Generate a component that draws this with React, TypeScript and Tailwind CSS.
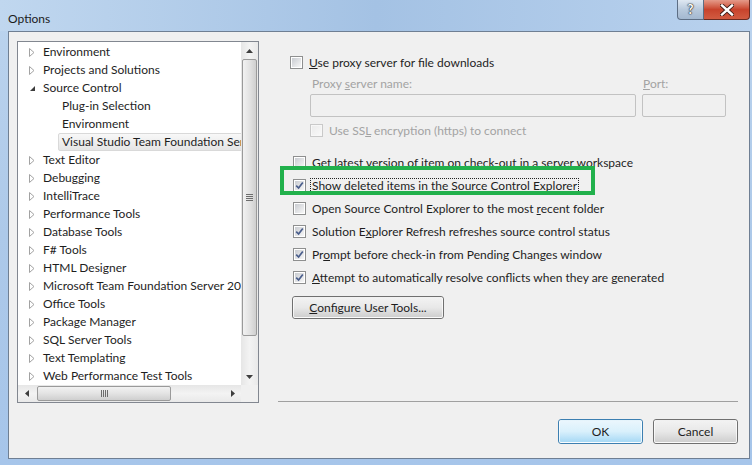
import React from "react";

const Check = ({ checked, disabled }: { checked?: boolean; disabled?: boolean }) => (
  <span
    className={`relative flex h-[13px] w-[13px] shrink-0 items-center justify-center border ${
      disabled ? "border-[#c9c9c9] bg-[#f7f7f7]" : "border-[#8e8f8f] bg-white"
    }`}
  >
    <span
      className={`h-[9px] w-[9px] bg-gradient-to-br ${
        disabled ? "from-[#ececec] to-[#f8f8f8]" : "from-[#c9ccd1] to-[#f7f7f7]"
      }`}
    />
    {checked && (
      <svg className="absolute left-[1px] top-[1px]" width="9" height="9" viewBox="0 0 9 9">
        <path d="M1.2 4.6 L3.6 7 L7.8 1.4" stroke="#4a5e8c" strokeWidth="1.7" fill="none" />
      </svg>
    )}
  </span>
);

const Arrow = ({ open }: { open?: boolean }) =>
  open ? (
    <svg width="7" height="7" viewBox="0 0 7 7">
      <polygon points="6,1 6,6 1,6" fill="#3c3c3c" />
    </svg>
  ) : (
    <svg width="6" height="9" viewBox="0 0 6 9">
      <path d="M0.5 0.5 L5 4.5 L0.5 8.5 Z" stroke="#a2a2a2" fill="#fff" strokeWidth="1" />
    </svg>
  );

const tree: { label: string; level: number; open?: boolean; selected?: boolean }[] = [
  { label: "Environment", level: 0 },
  { label: "Projects and Solutions", level: 0 },
  { label: "Source Control", level: 0, open: true },
  { label: "Plug-in Selection", level: 1 },
  { label: "Environment", level: 1 },
  { label: "Visual Studio Team Foundation Server", level: 1, selected: true },
  { label: "Text Editor", level: 0 },
  { label: "Debugging", level: 0 },
  { label: "IntelliTrace", level: 0 },
  { label: "Performance Tools", level: 0 },
  { label: "Database Tools", level: 0 },
  { label: "F# Tools", level: 0 },
  { label: "HTML Designer", level: 0 },
  { label: "Microsoft Team Foundation Server 2010 Power Tools", level: 0 },
  { label: "Office Tools", level: 0 },
  { label: "Package Manager", level: 0 },
  { label: "SQL Server Tools", level: 0 },
  { label: "Text Templating", level: 0 },
  { label: "Web Performance Test Tools", level: 0 },
];

const Grip = ({ vertical }: { vertical?: boolean }) => (
  <div className={`flex ${vertical ? "flex-col gap-[1px]" : "gap-[1px]"}`}>
    {[0, 1, 2, 3].map((i) => (
      <span key={i} className={vertical ? "h-px w-[7px] bg-[#6d6d6d]" : "h-[7px] w-px bg-[#6d6d6d]"} />
    ))}
  </div>
);

const TreeView = () => (
  <div className="flex h-[362px] w-[242px] flex-col border border-[#828790] bg-white">
    <div className="flex min-h-0 flex-1">
      <div className="w-[223px] overflow-hidden pt-[1px]">
        {tree.map((t, i) =>
          t.selected ? (
            <div key={i} className="flex h-[18px] items-center pl-[40px]">
              <div className="flex h-[18px] w-[200px] shrink-0 items-center whitespace-nowrap rounded-[2px] border border-[#d9d9d9] bg-gradient-to-b from-[#f8f8f8] to-[#e5e5e5] pl-[3px]">
                {t.label}
              </div>
            </div>
          ) : (
            <div
              key={i}
              className={`flex h-[18px] items-center whitespace-nowrap ${t.level ? "pl-[44px]" : "pl-[11px]"}`}
            >
              {t.level === 0 && (
                <span className="flex w-[14px] shrink-0 items-center">
                  <Arrow open={t.open} />
                </span>
              )}
              <span className="shrink-0">{t.label}</span>
            </div>
          )
        )}
      </div>
      <div className="flex w-[17px] flex-col bg-gradient-to-r from-[#e6e6e6] via-[#f3f3f3] to-[#e9e9e9]">
        <div className="flex h-[17px] items-center justify-center">
          <svg width="7" height="4" viewBox="0 0 7 4">
            <polygon points="3.5,0 7,4 0,4" fill="#3e3e3e" />
          </svg>
        </div>
        <div className="mx-px flex h-[277px] items-center justify-center rounded-[2px] border border-[#9a9a9a] bg-gradient-to-r from-[#f2f2f2] via-[#e3e3e3] to-[#cfcfcf]">
          <Grip vertical />
        </div>
        <div className="flex-1" />
        <div className="flex h-[17px] items-center justify-center">
          <svg width="7" height="4" viewBox="0 0 7 4">
            <polygon points="0,0 7,0 3.5,4" fill="#3e3e3e" />
          </svg>
        </div>
      </div>
    </div>
    <div className="flex h-[17px]">
      <div className="flex w-[223px] bg-gradient-to-b from-[#e6e6e6] via-[#f3f3f3] to-[#e9e9e9]">
        <div className="flex w-[17px] items-center justify-center">
          <svg width="4" height="7" viewBox="0 0 4 7">
            <polygon points="4,0 4,7 0,3.5" fill="#3e3e3e" />
          </svg>
        </div>
        <div className="my-px ml-[2px] flex w-[134px] items-center justify-center rounded-[2px] border border-[#9a9a9a] bg-gradient-to-b from-[#f2f2f2] via-[#e3e3e3] to-[#cfcfcf]">
          <Grip />
        </div>
        <div className="flex-1" />
        <div className="flex w-[17px] items-center justify-center">
          <svg width="4" height="7" viewBox="0 0 4 7">
            <polygon points="0,0 4,3.5 0,7" fill="#3e3e3e" />
          </svg>
        </div>
      </div>
      <div className="w-[17px] bg-[#f0f0f0]" />
    </div>
  </div>
);

const Row = ({ checked, children }: { checked?: boolean; children: React.ReactNode }) => (
  <div className="flex h-[23px] items-center gap-[6px] whitespace-nowrap">
    <Check checked={checked} />
    <span>{children}</span>
  </div>
);

const WinButton = ({
  children,
  width,
  primary,
}: {
  children: React.ReactNode;
  width: string;
  primary?: boolean;
}) => (
  <button
    className={`relative flex items-center justify-center overflow-hidden rounded-[3px] border ${width} ${
      primary ? "border-[#3c7fb1]" : "border-[#707070]"
    }`}
  >
    <span
      className={`absolute inset-0 rounded-[2px] border border-white/70 bg-gradient-to-b ${
        primary
          ? "from-[#eaf6fd] via-[#d9f0fc] to-[#a7d9f5]"
          : "from-[#f2f2f2] via-[#e8e8e8] to-[#cfcfcf]"
      }`}
    />
    <span className="relative">{children}</span>
  </button>
);

export default function App() {
  return (
    <div className="flex h-[465px] w-[752px] flex-col overflow-hidden bg-gradient-to-b from-[#bcd4ee] via-[#adc9e9] to-[#a6c5ea] font-[Lato,sans-serif] text-[12px] text-[#1e1e1e]">
      {/* title bar */}
      <div className="flex h-[31px] shrink-0 items-start justify-between bg-gradient-to-r from-[#c0d7ef] via-[#a4c2e4] to-[#b9d2ee]">
        <div className="pl-[8px] pt-[10px] text-[12px] text-[#1b1b1b]">Options</div>
        <div className="mr-[2px] flex">
          <div className="flex h-[20px] w-[27px] items-center justify-center rounded-bl-[4px] border border-t-0 border-[#5d6e84] bg-gradient-to-b from-[#dfe8f2] via-[#b8c9dc] to-[#a3b8d0]">
            <span className="text-[13px] font-bold leading-none text-white [text-shadow:0_0_1px_#222,0_0_1px_#222,0_0_2px_#333]">
              ?
            </span>
          </div>
          <div className="flex h-[20px] w-[46px] items-center justify-center rounded-br-[4px] border border-l-0 border-t-0 border-[#6a2a20] bg-gradient-to-b from-[#e49a89] via-[#c8432c] to-[#d25b41]">
            <svg width="14" height="12" viewBox="0 0 14 12">
              <path d="M2 1.5 L12 10.5 M12 1.5 L2 10.5" stroke="#3b1a14" strokeWidth="4.2" strokeLinecap="square" />
              <path d="M2 1.5 L12 10.5 M12 1.5 L2 10.5" stroke="#fff" strokeWidth="2.4" strokeLinecap="square" />
            </svg>
          </div>
        </div>
      </div>

      {/* client area */}
      <div className="mb-[6px] ml-[8px] mr-[2px] flex flex-1 flex-col border border-[#6f7f93] bg-[#f0f0f0]">
        <div className="flex pl-[8px] pt-[9px]">
          <TreeView />
          <div className="relative ml-[19px] flex w-[460px] flex-col">
            <div className="mt-[10px] pl-[12px]">
              <Row>
                <span className="underline">U</span>se proxy server for file downloads
              </Row>
            </div>
            <div className="mt-[1px] flex h-[18px] items-center pl-[32px] text-[#a3a3a3]">
              <span className="w-[332px] pl-[2px]">
                Proxy <span className="underline">s</span>erver name:
              </span>
              <span className="pl-px">
                <span className="underline">P</span>ort:
              </span>
            </div>
            <div className="mt-[1px] flex gap-[6px] pl-[32px]">
              <div className="h-[23px] w-[326px] rounded-[2px] border border-[#c2c2c2] bg-[#f0f0f0]" />
              <div className="h-[23px] w-[84px] rounded-[2px] border border-[#c2c2c2] bg-[#f0f0f0]" />
            </div>
            <div className="mt-[2px] flex h-[23px] items-center gap-[6px] pl-[32px] text-[#a3a3a3]">
              <Check disabled />
              <span>
                Use SS<span className="underline">L</span> encryption (https) to connect
              </span>
            </div>

            <div className="mt-[9px] pl-[15px]">
              <Row>Get latest version of item on check-out in a server workspace</Row>
              <div className="relative">
                <div className="flex h-[23px] items-center gap-[4px] whitespace-nowrap">
                  <Check checked />
                  <span className="border border-dotted border-[#222] px-[1px] leading-[13px]">
                    Show <span className="underline">d</span>eleted items in the Source Control Explorer
                  </span>
                </div>
                <div className="absolute left-[-13px] top-[-8px] h-[29px] w-[315px] border-[4px] border-[#22b14c]" />
              </div>
              <Row>
                Open Source Control Explorer to the most <span className="underline">r</span>ecent folder
              </Row>
              <Row checked>
                Solution E<span className="underline">x</span>plorer Refresh refreshes source control status
              </Row>
              <Row checked>
                Pr<span className="underline">o</span>mpt before check-in from Pending Changes window
              </Row>
              <Row checked>
                <span className="underline">A</span>ttempt to automatically resolve conflicts when they are generated
              </Row>
            </div>
            <div className="ml-[14px] mt-[7px] flex">
              <WinButton width="w-[152px] h-[23px]">
                <span className="underline">C</span>onfigure User Tools...
              </WinButton>
            </div>
            <div className="mt-auto mb-[1px] h-px bg-[#a0a0a0]" />
          </div>
        </div>
        <div className="mt-[16px] flex justify-end gap-[10px] pr-[11px]">
          <WinButton width="w-[85px] h-[25px]" primary>
            OK
          </WinButton>
          <WinButton width="w-[85px] h-[25px]">Cancel</WinButton>
        </div>
      </div>
    </div>
  );
}
